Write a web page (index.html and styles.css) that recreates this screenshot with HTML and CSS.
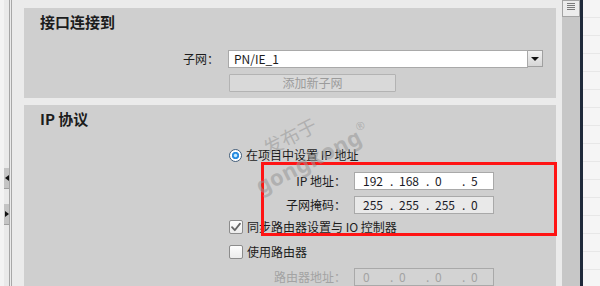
FILE: index.html
```html
<!DOCTYPE html>
<html lang="zh-CN">
<head>
  <meta charset="UTF-8" />
  <meta name="viewport" content="width=device-width, initial-scale=1.0" />
  <title>接口连接到</title>
  <link rel="stylesheet" href="styles.css">
</head>
<body>
  <div class="window">
    <div class="side-left">
      <div class="edge"></div>
      <div class="nav">
        <div class="nav-btn"><span class="tri-left"></span></div>
        <div class="nav-btn"><span class="tri-right"></span></div>
      </div>
      <div class="rule"></div>
      <div class="gutter"></div>
    </div>

    <div class="main">
      <!-- 接口连接 -->
      <div class="section section-iface">
        <h2>接口连接到</h2>
        <div class="row row-subnet">
          <label class="lbl lbl-subnet">子网：</label>
          <div class="select">
            <span class="select-text">PN/IE_1</span>
            <span class="select-btn"><span class="tri-down"></span></span>
          </div>
        </div>
        <div class="row row-add">
          <button class="btn-add" disabled>添加新子网</button>
        </div>
      </div>

      <!-- IP 协议 -->
      <div class="section section-ip">
        <h2>IP 协议</h2>
        <div class="row row-radio">
          <span class="radio"></span>
          <span class="opt">在项目中设置 IP 地址</span>
        </div>
        <div class="row row-ip">
          <label class="lbl lbl-ip">IP 地址：</label>
          <div class="ipfield">
            <span class="oct">192</span><span class="dot">.</span><span class="oct">168</span><span class="dot">.</span><span class="oct">0</span><span class="dot">.</span><span class="oct">5</span>
          </div>
        </div>
        <div class="row row-mask">
          <label class="lbl lbl-ip">子网掩码：</label>
          <div class="ipfield ipfield-ro">
            <span class="oct">255</span><span class="dot">.</span><span class="oct">255</span><span class="dot">.</span><span class="oct">255</span><span class="dot">.</span><span class="oct">0</span>
          </div>
        </div>
        <div class="row row-sync">
          <span class="check">
            <svg viewBox="0 0 14 14" width="14" height="14"><path d="M3 7.2 L5.8 10.2 L11 3.6" fill="none" stroke="#666" stroke-width="1.8" stroke-linecap="round" stroke-linejoin="round"/></svg>
          </span>
          <span class="opt">同步路由器设置与 IO 控制器</span>
        </div>
        <div class="row row-router">
          <span class="check"></span>
          <span class="opt">使用路由器</span>
        </div>
        <div class="row row-raddr">
          <label class="lbl lbl-ip lbl-off">路由器地址：</label>
          <div class="ipfield ipfield-off">
            <span class="oct">0</span><span class="dot">.</span><span class="oct">0</span><span class="dot">.</span><span class="oct">0</span><span class="dot">.</span><span class="oct">0</span>
          </div>
        </div>

        <div class="mark-box"></div>
      </div>
    </div>

    <div class="scroll">
      <div class="scroll-gap"></div>
      <div class="scroll-track">
        <div class="scroll-thumb">
          <span></span><span></span><span></span><span></span>
        </div>
      </div>
      <div class="scroll-line"></div>
    </div>

    <div class="side-right"></div>
  </div>

  <div class="watermark">
    <div class="wm-top">发布于</div>
    <div class="wm-bottom">gongkong<sup>®</sup></div>
  </div>
</body>
</html>
```

FILE: styles.css
```css
:root {
  --bg: #ebebeb;
  --panel: #cfcfcf;
  --border: #a9a9a9;
  --text: #1c1c1c;
  --muted: #a3a3a3;
  --red: #ff1414;
}

body {
  margin: 0;
  width: 600px;
  height: 286px;
  overflow: hidden;
  background: var(--bg);
  font-family: "Noto Sans CJK SC", "Noto Sans", sans-serif;
  font-size: 12px;
  color: var(--text);
  position: relative;
}

.window {
  display: flex;
  height: 286px;
}

/* 左侧窄条 */
.side-left {
  width: 24px;
  flex: none;
  display: flex;
}

.edge {
  width: 4px;
  background: #f3f3f3;
}

.nav {
  width: 5px;
  background: #e9e9e9;
  border-right: 1px solid #a5a5a5;
  padding-top: 168px;
  display: flex;
  flex-direction: column;
  gap: 15px;
}

.nav-btn {
  height: 20px;
  background: #c4c4c4;
  display: flex;
  align-items: center;
  justify-content: center;
  border-bottom: 1px solid #9f9f9f;
}

.tri-left {
  border-top: 3px solid transparent;
  border-bottom: 3px solid transparent;
  border-right: 4px solid #111;
}

.tri-right {
  border-top: 3px solid transparent;
  border-bottom: 3px solid transparent;
  border-left: 4px solid #111;
}

.rule {
  width: 1px;
  margin-left: 1px;
  background: #a8a8a8;
}

.gutter {
  flex: 1;
  background: var(--bg);
}

/* 主区域 */
.main {
  width: 532px;
  flex: none;
  padding-top: 8px;
  display: flex;
  flex-direction: column;
  gap: 7px;
}

.section {
  background: var(--panel);
  position: relative;
}

.section h2 {
  margin: 0;
  padding: 4px 0 0 16px;
  font-size: 15px;
  line-height: 20px;
  font-weight: bold;
}

.section-iface {
  height: 95px;
}

.section-ip {
  flex: 1;
}

.row {
  display: flex;
  align-items: center;
}

.lbl {
  flex: none;
  text-align: right;
  line-height: 18px;
}

.lbl-subnet {
  width: 195px;
  margin-right: 9px;
}

.lbl-ip {
  width: 322px;
  margin-right: 8px;
}

.lbl-off {
  color: var(--muted);
}

.row-subnet {
  margin-top: 18px;
}

.select {
  display: flex;
  height: 18px;
}

.select-text {
  width: 300px;
  box-sizing: border-box;
  height: 18px;
  background: #fff;
  border: 1px solid var(--border);
  padding-left: 5px;
  line-height: 16px;
}

.select-btn {
  width: 15px;
  height: 17px;
  box-sizing: border-box;
  border: 1px solid #a0a0a0;
  border-left: none;
  background: linear-gradient(#f2f2f2, #d6d6d6);
  display: flex;
  align-items: center;
  justify-content: center;
}

.tri-down {
  border-left: 4px solid transparent;
  border-right: 4px solid transparent;
  border-top: 4px solid #111;
}

.row-add {
  margin-top: 6px;
  padding-left: 205px;
}

.btn-add {
  width: 167px;
  height: 18px;
  padding: 0;
  font: inherit;
  font-size: 12px;
  line-height: 16px;
  color: #9b9b9b;
  background: #d9d9d9;
  border: 1px solid #b3b3b3;
  border-radius: 1px;
}

.row-radio {
  margin-top: 19px;
  padding-left: 205px;
  height: 14px;
}

.radio {
  width: 13px;
  height: 13px;
  box-sizing: border-box;
  border-radius: 50%;
  border: 1px solid #45607c;
  background: radial-gradient(circle, #c8ecff 0 1.2px, #2a8ce0 2.2px 3.4px, #ffffff 4px);
  margin-right: 4px;
}

.opt {
  line-height: 14px;
}

.row-ip {
  margin-top: 10px;
}

.row-mask {
  margin-top: 6px;
}

.ipfield {
  width: 140px;
  height: 18px;
  box-sizing: border-box;
  border: 1px solid var(--border);
  background: #fff;
  padding-left: 8px;
  line-height: 16px;
  white-space: nowrap;
  color: #1a1a26;
}

.ipfield-ro {
  background: #e9e9e9;
}

.ipfield-off {
  background: #d3d3d3;
  color: var(--muted);
}

.oct {
  display: inline-block;
  width: 27px;
}

.dot {
  display: inline-block;
  width: 9px;
}

.row-sync {
  margin-top: 6px;
  padding-left: 205px;
}

.row-router {
  margin-top: 11px;
  padding-left: 205px;
}

.check {
  width: 14px;
  height: 14px;
  box-sizing: border-box;
  border: 1px solid #8c8c8c;
  border-radius: 2px;
  background: linear-gradient(#fdfdfd, #ececec);
  margin-right: 4px;
  display: flex;
}

.check svg {
  margin: -1px;
}

.row-raddr {
  margin-top: 9px;
}

/* 红框标注 */
.mark-box {
  position: absolute;
  left: 237px;
  top: 57px;
  width: 296px;
  height: 74px;
  box-sizing: border-box;
  border: 3px solid var(--red);
}

/* 右侧滚动条 */
.scroll {
  width: 27px;
  flex: none;
  display: flex;
}

.scroll-gap {
  width: 6px;
  background: var(--bg);
}

.scroll-track {
  width: 18px;
  background: #c7c7c7;
}

.scroll-thumb {
  height: 17px;
  box-sizing: border-box;
  background: #ececec;
  border: 1px solid #a4a4a4;
  display: flex;
  flex-direction: column;
  align-items: center;
  padding-top: 2px;
  gap: 1px;
}

.scroll-thumb span {
  width: 8px;
  height: 1px;
  background: #7b7b7b;
}

.scroll-line {
  width: 3px;
  background: #1e2a3a;
}

.side-right {
  flex: 1;
  background: repeating-linear-gradient(#f5f5f5 0 17px, #e7e7e7 17px 18px);
}

/* 水印 */
.watermark {
  position: absolute;
  left: 238px;
  top: 150px;
  transform: rotate(-27deg);
  transform-origin: left top;
  color: rgba(150, 150, 150, 0.55);
  pointer-events: none;
}

.wm-top {
  font-size: 19px;
  line-height: 22px;
  padding-left: 24px;
}

.wm-bottom {
  font-family: "Noto Sans", sans-serif;
  font-size: 22px;
  line-height: 24px;
  font-weight: bold;
  letter-spacing: 0.5px;
}

.wm-bottom sup {
  font-size: 11px;
  font-weight: normal;
  vertical-align: 12px;
}
```
